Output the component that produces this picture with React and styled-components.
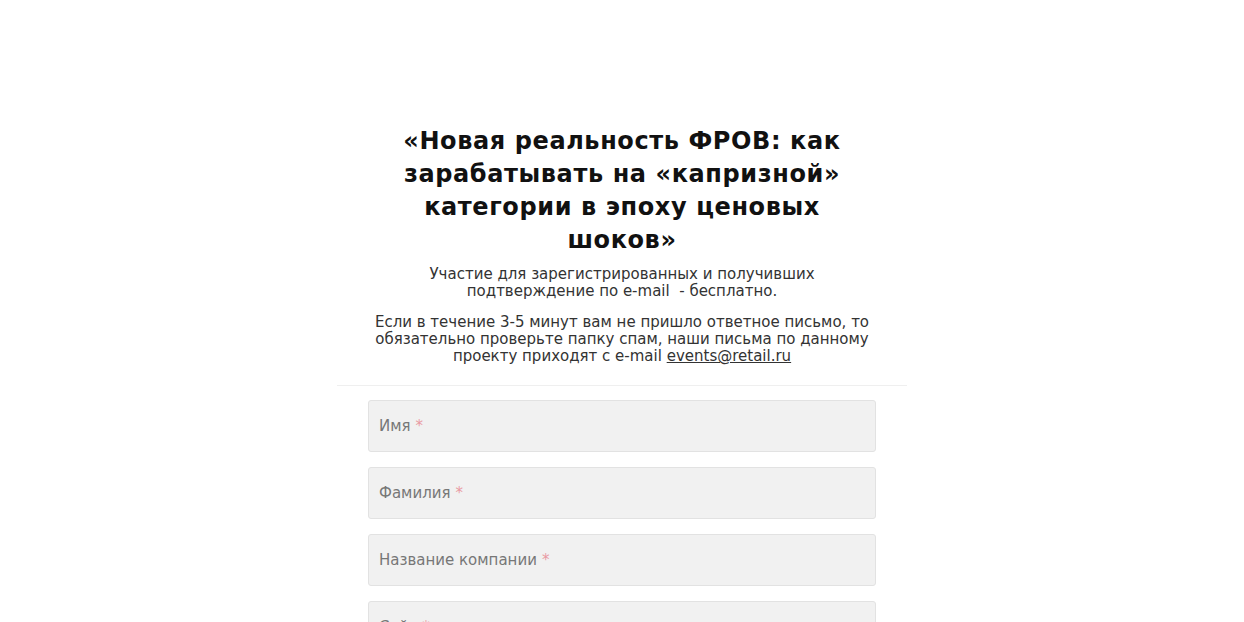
import React from "react";
import styled, { createGlobalStyle } from "styled-components";

const Global = createGlobalStyle`
  html, body { margin: 0; padding: 0; background: #fff; }
  body { font-family: "DejaVu Sans", "Liberation Sans", sans-serif; }
`;

const Page = styled.div`
  display: flex;
  justify-content: center;
  padding-top: 125px;
`;

const Form = styled.div`
  width: 570px;
  display: flex;
  flex-direction: column;
`;

const Header = styled.header`
  display: flex;
  flex-direction: column;
  align-items: center;
  padding: 0 30px 20px;
  border-bottom: 1px solid #efefef;
  text-align: center;
`;

const Title = styled.h1`
  margin: 0 0 9px;
  max-width: 450px;
  font-size: 24px;
  line-height: 33px;
  font-weight: bold;
  letter-spacing: 0.6px;
  color: #111;
`;

const Note = styled.p`
  margin: 0 0 14px;
  font-size: 15px;
  line-height: 17px;
  color: #333;
  &:last-child { margin-bottom: 0; }
`;

const Link = styled.a`
  color: #333;
  text-decoration: underline;
`;

const Fields = styled.div`
  display: flex;
  flex-direction: column;
  gap: 15px;
  padding: 14px 31px 0;
`;

const Field = styled.div`
  height: 52px;
  box-sizing: border-box;
  background: #f1f1f1;
  border: 1px solid #e2e2e2;
  border-radius: 3px;
  padding: 0 10px;
  display: flex;
  align-items: center;
  font-size: 15px;
  color: #777;
`;

const Req = styled.span`
  color: #e99aa3;
  margin-left: 5px;
`;

const fields = ["Имя", "Фамилия", "Название компании", "Сайт"];

export default function App() {
  return (
    <>
      <Global />
      <Page>
        <Form>
          <Header>
            <Title>«Новая реальность ФРОВ: как зарабатывать на «капризной» категории в эпоху ценовых шоков»</Title>
            <Note>
              Участие для зарегистрированных и получивших<br />
              подтверждение по e-mail&nbsp; - бесплатно.
            </Note>
            <Note>
              Если в течение 3-5 минут вам не пришло ответное письмо, то обязательно проверьте папку спам, наши письма по данному проекту приходят с e-mail{" "}
              <Link href="#">events@retail.ru</Link>
            </Note>
          </Header>
          <Fields>
            {fields.map((f) => (
              <Field key={f}>
                {f}
                <Req>*</Req>
              </Field>
            ))}
          </Fields>
        </Form>
      </Page>
    </>
  );
}
